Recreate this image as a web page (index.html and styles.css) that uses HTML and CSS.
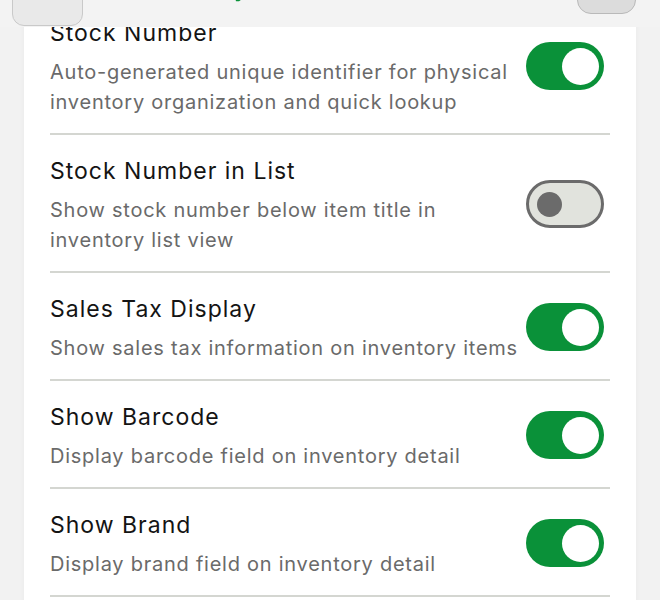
FILE: index.html
```html
<!DOCTYPE html>
<html lang="en">
<head>
    <meta charset="UTF-8">
    <meta name="viewport" content="width=device-width, initial-scale=1.0">
    <title>Inventory Settings</title>
    <link rel="stylesheet" href="styles.css">
</head>
<body>
    <header class="topbar">
        <button class="nav-btn nav-back" aria-label="Back"></button>
        <h1 class="nav-title">Inventory</h1>
        <button class="nav-btn nav-done" aria-label="Done"></button>
    </header>

    <div class="card">
        <div class="row">
            <div class="row-text">
                <div class="row-title">Stock Number</div>
                <div class="row-desc">Auto-generated unique identifier for physical inventory organization and quick lookup</div>
            </div>
            <div class="toggle on"><span class="knob"></span></div>
        </div>
        <div class="row">
            <div class="row-text">
                <div class="row-title">Stock Number in List</div>
                <div class="row-desc">Show stock number below item title in inventory list view</div>
            </div>
            <div class="toggle"><span class="knob"></span></div>
        </div>
        <div class="row">
            <div class="row-text">
                <div class="row-title">Sales Tax Display</div>
                <div class="row-desc">Show sales tax information on inventory items</div>
            </div>
            <div class="toggle on"><span class="knob"></span></div>
        </div>
        <div class="row">
            <div class="row-text">
                <div class="row-title">Show Barcode</div>
                <div class="row-desc">Display barcode field on inventory detail</div>
            </div>
            <div class="toggle on"><span class="knob"></span></div>
        </div>
        <div class="row">
            <div class="row-text">
                <div class="row-title">Show Brand</div>
                <div class="row-desc">Display brand field on inventory detail</div>
            </div>
            <div class="toggle on"><span class="knob"></span></div>
        </div>
    </div>
</body>
</html>
```

FILE: styles.css
```css
body {
    font-family: 'Inter', 'Noto Sans', sans-serif;
    margin: 0;
    padding: 0;
    background: #f2f2f2;
    overflow: hidden;
}

.topbar {
    position: fixed;
    top: 0;
    left: 0;
    right: 0;
    height: 27px;
    background: #f3f3f3;
    display: flex;
    align-items: flex-end;
    padding: 0 24px 0 12px;
    z-index: 2;
}

.nav-btn {
    border: 1px solid #c9c9c9;
    border-radius: 12px;
    background: #e9e9e9;
    padding: 0;
}

.nav-back {
    width: 71px;
    height: 46px;
    margin-bottom: 1px;
}

.nav-done {
    width: 59px;
    height: 40px;
    margin-bottom: 13px;
    margin-left: auto;
    background: #dcdcdc;
    border-color: #b9b9b9;
    border-radius: 14px;
}

.nav-title {
    margin: 0 0 25px 70px;
    font-size: 20px;
    font-weight: 700;
    color: #0a9139;
}

.card {
    background: white;
    margin: -3px 24px 0 24px;
    padding: 0 26px;
    box-shadow: 0 0 6px rgba(0,0,0,0.04);
    min-height: 620px;
}

.row {
    display: flex;
    align-items: center;
    gap: 5px;
    padding: 18px 6px 16px 0;
    border-bottom: 2px solid #d4d6d1;
}

.row-text {
    flex: 1;
    padding-top: 3px;
}

.row-title {
    font-size: 23px;
    line-height: 30px;
    color: #141414;
    letter-spacing: 1px;
}

.row-desc {
    margin-top: 9px;
    font-size: 20px;
    line-height: 30px;
    color: #6a6a6a;
    letter-spacing: 0.75px;
}

.toggle {
    flex: none;
    box-sizing: border-box;
    width: 78px;
    height: 48px;
    border-radius: 24px;
    border: 3px solid #6b6b6b;
    background: #e1e3dd;
    display: flex;
    align-items: center;
    padding: 0 8px;
}

.toggle .knob {
    width: 25px;
    height: 25px;
    border-radius: 50%;
    background: #6b6b6b;
}

.toggle.on {
    border: none;
    background: #0a9139;
    justify-content: flex-end;
    padding: 0 5px;
}

.toggle.on .knob {
    width: 37px;
    height: 37px;
    background: white;
}
```
